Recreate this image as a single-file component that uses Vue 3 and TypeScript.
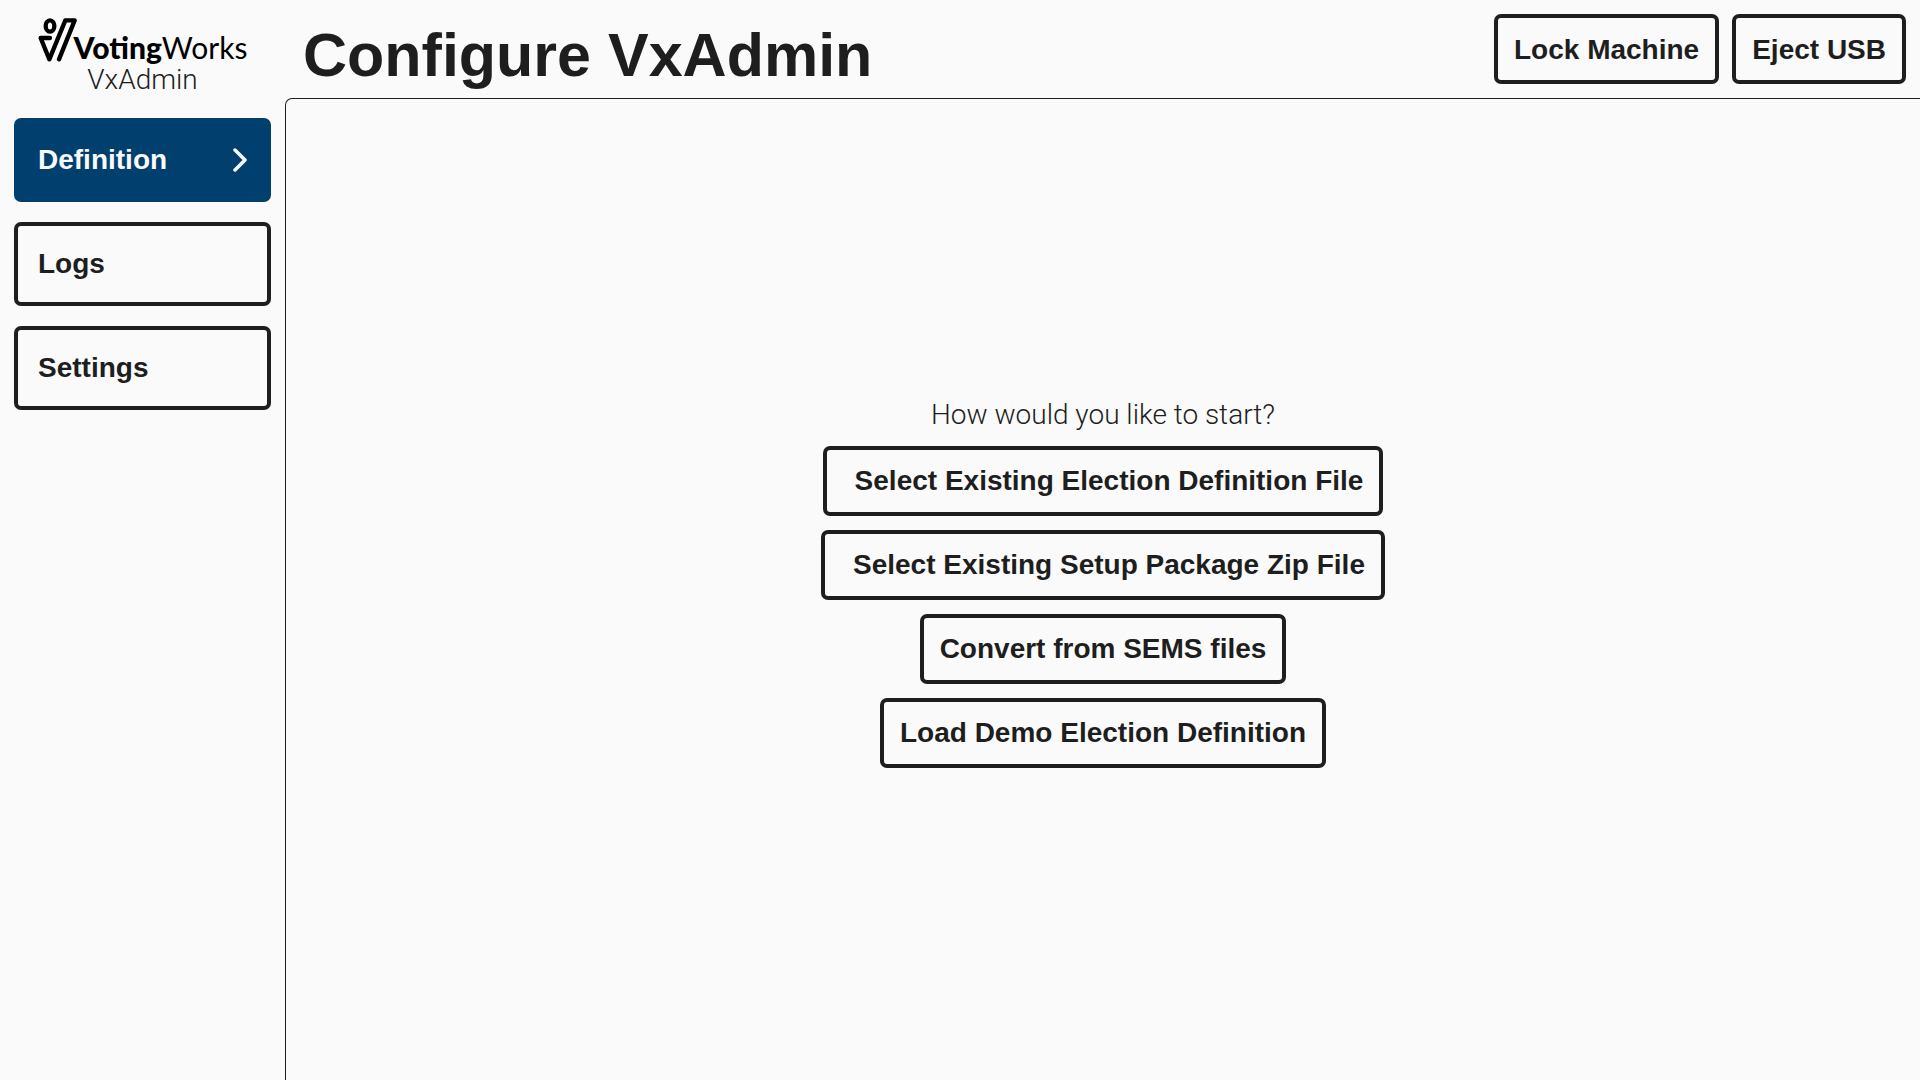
<script setup lang="ts">
interface NavItem {
  label: string
  active: boolean
}

const navItems: NavItem[] = [
  { label: 'Definition', active: true },
  { label: 'Logs', active: false },
  { label: 'Settings', active: false },
]

interface StartOption {
  label: string
  filePicker: boolean
}

const startOptions: StartOption[] = [
  { label: 'Select Existing Election Definition File', filePicker: true },
  { label: 'Select Existing Setup Package Zip File', filePicker: true },
  { label: 'Convert from SEMS files', filePicker: false },
  { label: 'Load Demo Election Definition', filePicker: false },
]
</script>

<template>
  <div class="screen">
    <aside class="sidebar">
      <div class="brand">
        <div class="logo">
          <svg class="mark" viewBox="22 20 120 135" aria-hidden="true">
            <g fill="none" stroke="#000" stroke-width="13" stroke-linejoin="round" stroke-linecap="round">
              <ellipse cx="58" cy="47" rx="13" ry="17" />
              <path d="M58 83H30L56 147L104 30H132L85 147" />
            </g>
          </svg>
          <span class="wordmark"><b>Voting</b>Works</span>
        </div>
        <div class="product">VxAdmin</div>
      </div>
      <nav class="nav">
        <button
          v-for="item in navItems"
          :key="item.label"
          type="button"
          class="btn nav-btn"
          :class="{ active: item.active }"
        >
          <span>{{ item.label }}</span>
          <svg v-if="item.active" class="chevron" viewBox="0 0 16 24" aria-hidden="true">
            <path d="M2 2L12 12L2 22" fill="none" stroke="currentColor" stroke-width="3.5" stroke-linecap="round" stroke-linejoin="round" />
          </svg>
        </button>
      </nav>
    </aside>
    <div class="page">
      <header class="header">
        <h1>Configure VxAdmin</h1>
        <div class="actions">
          <button type="button" class="btn">Lock Machine</button>
          <button type="button" class="btn">Eject USB</button>
        </div>
      </header>
      <main class="content">
        <p class="prompt">How would you like to start?</p>
        <button
          v-for="option in startOptions"
          :key="option.label"
          type="button"
          class="btn"
          :class="{ picker: option.filePicker }"
        >
          {{ option.label }}
        </button>
      </main>
    </div>
  </div>
</template>

<style>
body {
  background: #fafafa;
}
</style>

<style scoped>
.screen {
  display: flex;
  min-height: 100vh;
  background: #fafafa;
  color: #1e1e1e;
  font-family: "Liberation Sans", Arial, sans-serif;
  font-size: 28px;
  line-height: 34px;
}
.sidebar {
  box-sizing: border-box;
  flex: 0 0 285px;
  padding: 17px 14px;
}
.brand {
  height: 101px;
}
.logo {
  display: flex;
  justify-content: center;
  height: 46px;
  color: #000;
}
.mark {
  flex: none;
  width: 40px;
  height: 45px;
  margin-right: -4px;
}
.wordmark {
  font-family: Lato, sans-serif;
  font-size: 30px;
  line-height: 30px;
  padding-top: 15px;
}
.wordmark b {
  font-weight: 900;
}
.product {
  font-family: Roboto, sans-serif;
  font-weight: 300;
  text-align: center;
}
.nav {
  display: flex;
  flex-direction: column;
  gap: 20px;
}
.btn {
  height: 70px;
  padding: 1px 16px 0;
  border: 4px solid #1e1e1e;
  border-radius: 7px;
  background: transparent;
  color: #1e1e1e;
  font: inherit;
  font-weight: 700;
  white-space: nowrap;
  cursor: pointer;
}
.nav-btn {
  display: flex;
  align-items: center;
  justify-content: space-between;
  height: 84px;
  padding: 0 18px 0 20px;
  text-align: left;
}
.active {
  border-color: #003f6e;
  background: #003f6e;
  color: #fafafa;
}
.chevron {
  width: 16px;
  height: 24px;
}
.page {
  display: flex;
  flex: 1;
  flex-direction: column;
  min-width: 0;
}
.header {
  display: flex;
  align-items: center;
  justify-content: space-between;
  height: 98px;
  padding: 0 14px 0 18px;
}
h1 {
  margin: 0;
  padding-top: 12px;
  font-size: 61px;
  line-height: 72px;
}
.actions {
  display: flex;
  gap: 13px;
}
.content {
  display: flex;
  flex: 1;
  flex-direction: column;
  align-items: center;
  justify-content: center;
  gap: 14px;
  padding-bottom: 14px;
  border: 1px solid #1e1e1e;
  border-width: 1px 0 0 1px;
  border-top-left-radius: 7px;
}
.prompt {
  margin: 0;
  font-family: Roboto, sans-serif;
  font-weight: 300;
}
.picker {
  padding-left: 28px;
}
</style>
